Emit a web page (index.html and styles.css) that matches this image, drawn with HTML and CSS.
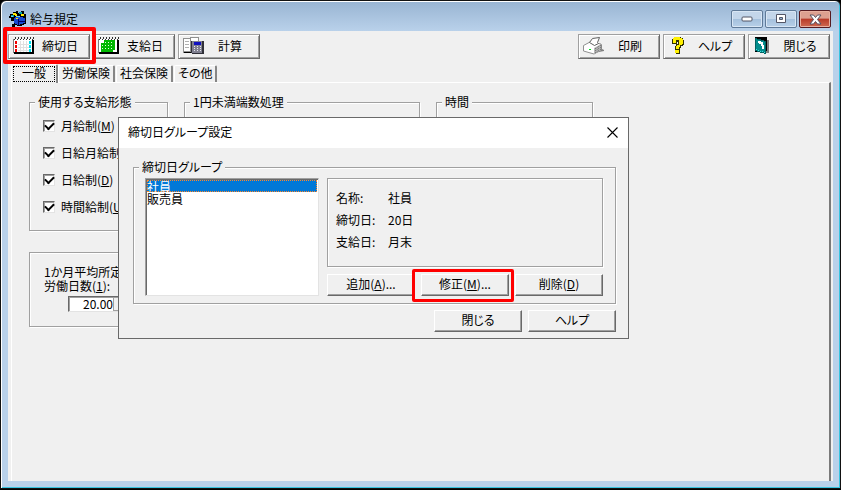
FILE: index.html
```
<!DOCTYPE html>
<html lang="ja">
<head>
    <meta charset="UTF-8">
    <meta name="viewport" content="width=device-width, initial-scale=1.0">
    <title>給与規定</title>
    <link rel="stylesheet" href="styles.css">
</head>
<body>
    <div class="window">
        <header class="titlebar">
            <svg class="app-icon" width="18" height="16" viewBox="0 0 18 16" shape-rendering="crispEdges" aria-hidden="true">
                <path fill="#000" d="M1 3h3V1h3V0h2v2h3V0h3v3h2v3h0v7h-2v1h-2v1H8v-1H6v2H3v-3h2v-3H2V7H0V5h1z"/>
                <path fill="#00a0a8" d="M2 4h3v2H2zM10 1h3v2h-3z"/>
                <path fill="#1848d0" d="M5 7l4-2 7 2v5l-7 2-4-2z"/>
                <path fill="#000060" d="M9 8h1v6H9zM10 10h6v1h-6z"/>
                <path fill="#ffe800" d="M4 2h3v1h1v2H6V4H4zM12 3h3v2h-3zM7 7h2v1H7z"/>
                <path fill="#60d8ff" d="M7 5h4v1H7zM2 5h2v1H2z"/>
            </svg>
            <h1 class="title">給与規定</h1>
            <div class="caption-buttons">
                <button type="button" class="caption" aria-label="最小化">
                    <svg width="12" height="6" viewBox="0 0 12 6"><rect x="1" y="1" width="10" height="4" rx="1" fill="#fff" stroke="#535666"/></svg>
                </button>
                <button type="button" class="caption" aria-label="最大化">
                    <svg width="12" height="10" viewBox="0 0 12 10"><path d="M1.5.5h9v8h-9z" fill="#fff" stroke="#535666"/><path d="M4.500 3.500h3v2h-3z" fill="#8fb0d0" stroke="#535666"/></svg>
                </button>
                <button type="button" class="caption caption-close" aria-label="閉じる">
                    <svg width="13" height="11" viewBox="0 0 13 11"><path d="M1 1h3.500l2 2.500L8.500 1H12L8.500 5.500 12 10H8.500l-2-2.500-2 2.500H1l3.500-4.500z" fill="#fff" stroke="#565060"/></svg>
                </button>
            </div>
        </header>

        <main class="client">
            <nav class="toolbar">
                <button type="button" class="btn tool marked">
                    <svg width="22" height="18" viewBox="0 0 22 18" shape-rendering="crispEdges" aria-hidden="true">
                        <path fill="#fff" d="M1 2h18v14H1z"/>
                        <path fill="#e0e0e0" d="M7 4h1v11H7zM10 4h1v11h-1zM13 4h1v11h-1zM5 7h11v1H5zM5 10h11v1H5zM5 13h11v1H5z"/>
                        <path fill="#808080" d="M0 2h1v14H0z"/>
                        <path fill="#000" d="M1 15h20v2H1zM19 3h2v14h-2z"/>
                        <path fill="#f00000" d="M2 4h2v11H2z"/>
                        <path fill="#00e0f0" d="M16 4h2v11h-2z"/>
                        <path fill="#ffffff" d="M2 7h2v1H2zM2 11h2v1H2zM16 7h2v1h-2zM16 11h2v1h-2z"/>
                        <path fill="#303030" d="M1 2h1v1H1zM2 0h1v2H2zM4 2h1v1H4zM5 0h1v2H5zM7 2h1v1H7zM8 0h1v2H8zM10 2h1v1h-1zM11 0h1v2h-1zM13 2h1v1h-1zM14 0h1v2h-1zM16 2h1v1h-1zM17 0h1v2h-1zM19 2h1v1h-1zM20 0h1v2h-1z"/>
                    </svg>
                    <span class="tool-label">締切日</span>
                </button>
                <button type="button" class="btn tool">
                    <svg width="22" height="18" viewBox="0 0 22 18" shape-rendering="crispEdges" aria-hidden="true">
                        <path fill="#fff" d="M1 2h18v14H1z"/>
                        <path fill="#00b800" d="M6 3h11v10h-2v2H3V6h3z"/>
                        <path fill="#d8ffd8" d="M7 5h1v1H7zM10 5h1v1h-1zM13 5h1v1h-1zM4 8h1v1H4zM7 8h1v1H7zM10 8h1v1h-1zM13 8h1v1h-1zM4 11h1v1H4zM7 11h1v1H7zM10 11h1v1h-1zM13 11h1v1h-1z"/>
                        <path fill="#808080" d="M0 2h1v14H0z"/>
                        <path fill="#000" d="M1 15h20v2H1zM19 3h2v14h-2z"/>
                        <path fill="#303030" d="M1 2h1v1H1zM2 0h1v2H2zM4 2h1v1H4zM5 0h1v2H5zM7 2h1v1H7zM8 0h1v2H8zM10 2h1v1h-1zM11 0h1v2h-1zM13 2h1v1h-1zM14 0h1v2h-1zM16 2h1v1h-1zM17 0h1v2h-1zM19 2h1v1h-1zM20 0h1v2h-1z"/>
                    </svg>
                    <span class="tool-label">支給日</span>
                </button>
                <button type="button" class="btn tool">
                    <svg width="22" height="18" viewBox="0 0 22 18" shape-rendering="crispEdges" aria-hidden="true">
                        <path fill="#909090" d="M0 1h7V0h9v14H9v2H0z"/>
                        <path fill="#fff" d="M1 2h6v12H1zM8 1h7v12H8z"/>
                        <path fill="#b0b0b0" d="M2 4h4v1H2zM2 7h4v1H2zM2 10h4v1H2z"/>
                        <path fill="#000" d="M1 15h8v1H1z"/>
                        <path fill="#808090" d="M9 4h11v13H9z"/>
                        <path fill="#303038" d="M19 4h2v13h-2zM9 16h12v1H9zM8 4h1v12H8z"/>
                        <path fill="#1010c0" d="M11 5h7v3h-7z"/>
                        <path fill="#e8e8f0" d="M11 9h1v1h-1zM14 9h1v1h-1zM17 9h1v1h-1zM11 11h1v1h-1zM14 11h1v1h-1zM17 11h1v1h-1zM11 13h1v1h-1zM14 13h1v1h-1zM17 13h1v1h-1z"/>
                    </svg>
                    <span class="tool-label">計算</span>
                </button>
                <span class="spacer"></span>
                <button type="button" class="btn tool">
                    <svg width="22" height="18" viewBox="0 0 22 18" aria-hidden="true">
                        <path fill="#808080" d="M11 16l10-2v-1l-2-1V7z"/>
                        <path fill="#fff" stroke="#909090" d="M.5 8.500L7 5l11 2v6l-7 4-10.500-3z"/>
                        <path fill="#b8b8b8" d="M11 11l7-4v6l-7 4z"/>
                        <path fill="#fff" stroke="#606060" d="M6.500 5.500l3-4 7-1-2 5 1 1-4 2z"/>
                        <path stroke="#606060" stroke-dasharray="1 1" d="M12 12l6-4M12 14l6-4M12 16l6-4"/>
                        <path fill="#00e020" d="M6 12h2v1H6z"/>
                    </svg>
                    <span class="tool-label">印刷</span>
                </button>
                <button type="button" class="btn tool">
                    <svg width="22" height="18" viewBox="0 0 22 18" shape-rendering="crispEdges" aria-hidden="true">
                        <path fill="#303000" d="M6 0h7v1h2v2h1v5h-1v1h-2v2h-1v2H7V9h1V7h2V5H9v2H4V2h2zM7 13h5v4H8v-1H7z"/>
                        <path fill="#fff000" d="M6 0h6v1h2v1h1v5h-1v1h-2v2h-1v2H8V9h1V8h2V3H8v3H5V1h1zM7 13h4v3H7z"/>
                    </svg>
                    <span class="tool-label">ヘルプ</span>
                </button>
                <button type="button" class="btn tool">
                    <svg width="22" height="18" viewBox="0 0 22 18" shape-rendering="crispEdges" aria-hidden="true">
                        <path fill="#000" d="M2 0h12v15H2z"/>
                        <path fill="#808080" d="M14 3h2v13h-5v-2h3z"/>
                        <path fill="#008c8c" stroke="#006060" d="M2.500 1.500l10 3v12l-10-3z"/>
                        <path fill="#fff" d="M5 4h3v1h2v3h1v4h-2V9H8V7H6V6H5z"/>
                        <path fill="#40e0e0" d="M3 12h1v1H3zM5 13h1v1H5zM7 14h1v1H7zM9 14h1v1H9zM11 15h1v1h-1z"/>
                    </svg>
                    <span class="tool-label">閉じる</span>
                </button>
            </nav>

            <div class="tabs" role="tablist">
                <button type="button" role="tab" class="tab tab-active" aria-selected="true"><span class="tab-focus">一般</span></button>
                <button type="button" role="tab" class="tab">労働保険</button>
                <button type="button" role="tab" class="tab">社会保険</button>
                <button type="button" role="tab" class="tab">その他</button>
            </div>

            <section class="panel" role="tabpanel">
                <fieldset class="group">
                    <legend>使用する支給形態</legend>
                    <label class="check"><input type="checkbox" checked><span>月給制(<u>M</u>)</span></label>
                    <label class="check"><input type="checkbox" checked><span>日給月給制</span></label>
                    <label class="check"><input type="checkbox" checked><span>日給制(<u>D</u>)</span></label>
                    <label class="check"><input type="checkbox" checked><span>時間給制(<u>U</u>)</span></label>
                </fieldset>
                <fieldset class="group">
                    <legend>1円未満端数処理</legend>
                </fieldset>
                <fieldset class="group">
                    <legend>時間</legend>
                </fieldset>
                <div class="group days">
                    <label for="days">1か月平均所定<br>労働日数(<u>1</u>):</label>
                    <div class="spin">
                        <input type="text" id="days" value="20.00">
                        <button type="button" class="spin-btn" aria-label="日数を選択"></button>
                    </div>
                </div>
            </section>
        </main>

        <!-- 締切日グループ設定ダイアログ -->
        <div class="dialog" role="dialog" aria-labelledby="dialog-title">
            <div class="dialog-title">
                <h2 class="title" id="dialog-title">締切日グループ設定</h2>
                <button type="button" class="dialog-x" aria-label="閉じる">
                    <svg width="11" height="11" viewBox="0 0 11 11"><path d="M.5.5l10 10M10.500.5l-10 10" stroke="#000" stroke-width="1.100"/></svg>
                </button>
            </div>
            <div class="dialog-body">
                <fieldset class="group closing">
                    <legend>締切日グループ</legend>
                    <select class="listbox" size="9" aria-label="締切日グループ">
                        <option selected>社員</option>
                        <option>販売員</option>
                    </select>
                    <div class="detail">
                        <dl class="info">
                            <dt>名称:</dt><dd>社員</dd>
                            <dt>締切日:</dt><dd>20日</dd>
                            <dt>支給日:</dt><dd>月末</dd>
                        </dl>
                        <div class="actions">
                            <button type="button" class="btn">追加(<u>A</u>)...</button>
                            <button type="button" class="btn marked marked-wide">修正(<u>M</u>)...</button>
                            <button type="button" class="btn">削除(<u>D</u>)</button>
                        </div>
                    </div>
                </fieldset>
                <div class="dialog-footer">
                    <button type="button" class="btn">閉じる</button>
                    <button type="button" class="btn">ヘルプ</button>
                </div>
            </div>
        </div>
    </div>
</body>
</html>
```
FILE: styles.css
```
* {
    margin: 0;
    padding: 0;
    box-sizing: border-box;
}
body {
    background: #000;
    color: #000;
    font-family: "Noto Sans CJK JP", sans-serif;
    font-size: 12px;
    line-height: 14px;
    font-feature-settings: "palt";
    overflow: hidden;
}
button, input, select {
    font: inherit;
    color: inherit;
    font-feature-settings: inherit;
}
.window {
    position: relative;
    display: flex;
    flex-direction: column;
    height: calc(100vh - 1px);
    border: 1px solid #111;
    border-radius: 6px 6px 0 0;
    padding: 0 7px 7px;
    background: linear-gradient(#98b4d2, #b9d1ea 30px);
    box-shadow: inset 1px 1px 0 #fff, inset -1px -1px 0 #38c4e0;
}

/* タイトルバー */
.titlebar {
    display: flex;
    align-items: center;
    height: 30px;
    padding: 6px 2px 0 1px;
    flex: none;
}
.title {
    font-size: 12px;
    font-weight: normal;
}
.titlebar .title {
    margin-left: 3px;
}
.caption-buttons {
    display: flex;
    gap: 2px;
    margin-left: auto;
}
.caption {
    display: flex;
    align-items: center;
    justify-content: center;
    width: 32px;
    height: 18px;
    border: 1px solid #5f7a98;
    border-radius: 2px;
    background: linear-gradient(#c3d6ea 50%, #a4c0dc 50%, #b8d0e8);
    box-shadow: inset 0 0 0 1px #d8e6f4;
}
.caption-close {
    border-color: #561a20;
    background: linear-gradient(#dda090 45%, #b83a28 50%, #cf6a52);
    box-shadow: inset 0 0 0 1px #e8b0a0;
}

/* ツールバー */
.client {
    display: flex;
    flex-direction: column;
    flex: 1;
    padding-top: 3px;
    background: #f0f0f0;
}
.toolbar {
    display: flex;
    gap: 3px;
    padding-right: 3px;
}
.spacer {
    flex: 1;
}
.btn {
    position: relative;
    height: 22px;
    padding-bottom: 2px;
    background: #f0f0f0;
    border: 1px solid;
    border-color: #fff #696969 #696969 #fff;
    box-shadow: inset -1px -1px 0 #a0a0a0;
}
.tool {
    display: flex;
    align-items: center;
    width: 82px;
    height: 25px;
    padding: 0 4px 1px;
    border-color: #a0a0a0 #696969 #696969 #a0a0a0;
    box-shadow: inset 1px 1px 0 #fff, inset -1px -1px 0 #a0a0a0;
}
.tool svg {
    flex: none;
}
.tool-label {
    flex: 1;
    text-align: center;
}
/* 赤枠の強調表示 */
.marked::after {
    content: "";
    position: absolute;
    inset: -8px -7px -6px -6px;
    border: 4px solid #f00;
    border-radius: 2px;
    z-index: 1;
}
.marked-wide::after {
    inset: -6px -6px -7px -10px;
    border-width: 3px;
}

/* タブ */
.tabs {
    display: flex;
    align-items: flex-end;
    margin: 5px 0 0 3px;
}
.tab {
    height: 17px;
    padding: 0 3px 2px;
    margin-right: 1px;
    background: #f0f0f0;
    border: 0 solid;
    border-width: 1px 2px 0 1px;
    border-color: #fff #868686 #fff #fff;
    border-radius: 2px 2px 0 0;
}
.tab-active {
    height: 19px;
    margin: 0 0 -1px;
    padding: 0 1px;
    z-index: 1;
}
.tab-focus {
    display: block;
    padding: 0 8px;
    height: 16px;
    border: 1px dotted #000;
    line-height: 12px;
}
.panel {
    display: grid;
    grid-template-columns: 139px 236px 157px;
    align-content: start;
    gap: 21px 16px;
    flex: 1;
    margin: 0 2px 0 3px;
    padding: 12px 17px;
    border: 1px solid #fff;
    border-right: 2px solid #7a7a7a;
    border-bottom: 0;
}
.group {
    min-width: 0;
    border: 1px solid #a0a0a0;
    box-shadow: 1px 1px 0 #fff, inset 1px 1px 0 #fff;
    padding: 3px 13px 10px;
    white-space: nowrap;
}
.group legend {
    margin-left: -8px;
    padding: 0 3px;
    background: #f0f0f0;
}
.check {
    display: flex;
    align-items: center;
    gap: 6px;
    height: 27px;
}
.check input {
    appearance: none;
    width: 12px;
    height: 12px;
    border: 1px solid;
    border-color: #696969 #e3e3e3 #e3e3e3 #696969;
    box-shadow: inset 1px 1px 0 #a0a0a0;
    background: #fff;
    display: grid;
    place-items: center;
}
.check input:checked::before {
    content: "";
    width: 7px;
    height: 4px;
    margin-top: -2px;
    border: solid #000;
    border-width: 0 0 2px 2px;
    transform: rotate(-45deg);
}
.days {
    padding: 12px 13px 14px;
}
.days label {
    display: block;
    padding-bottom: 3px;
    margin-left: 1px;
}
.spin {
    display: flex;
    height: 16px;
    margin-left: 25px;
    width: 64px;
    background: #fff;
    border: 1px solid;
    border-color: #696969 #e3e3e3 #e3e3e3 #696969;
    box-shadow: inset 1px 1px 0 #a0a0a0;
}
.spin input {
    width: 44px;
    border: 0;
    background: none;
    text-align: right;
}
.spin-btn {
    flex: 1;
    background: #f0f0f0;
    border: 1px solid #a0a0a0;
}

/* ダイアログ */
.dialog {
    position: absolute;
    left: 117px;
    top: 116px;
    background: #f0f0f0;
    border: 1px solid #696969;
    z-index: 2;
}
.dialog-title {
    display: flex;
    align-items: center;
    justify-content: space-between;
    height: 30px;
    padding: 0 10px 2px 9px;
    background: #fff;
}
.dialog-x {
    display: flex;
    background: none;
    border: 0;
}
.dialog-body {
    padding: 12px 12px 6px 14px;
}
.closing {
    display: grid;
    grid-template-columns: 174px 276px;
    gap: 8px;
    padding: 4px 12px 7px 11px;
}
.closing legend {
    margin-left: -6px;
}
.listbox {
    height: 118px;
    overflow: hidden;
    background: #fff;
    border: 1px solid;
    border-color: #a0a0a0 #e3e3e3 #e3e3e3 #a0a0a0;
    border-radius: 0;
    box-shadow: inset 1px 1px 0 #696969;
    padding: 1px;
    outline: 0;
}
.listbox option {
    display: flex;
    align-items: center;
    height: 12px;
    min-height: 12px;
    padding: 0;
    overflow: visible;
}
.listbox option:checked {
    background: #0078d7 linear-gradient(#0078d7, #0078d7);
    -webkit-text-fill-color: #fff;
    outline: 1px dotted #ff8728;
    outline-offset: -1px;
}
.detail {
    display: flex;
    flex-direction: column;
    justify-content: space-between;
}
.info {
    display: grid;
    grid-template-columns: 52px 1fr;
    grid-auto-rows: 22px;
    line-height: 22px;
    height: 89px;
    padding: 8px;
    border: 1px solid #a0a0a0;
    box-shadow: 1px 1px 0 #fff, inset 1px 1px 0 #fff;
}
.actions {
    display: grid;
    grid-template-columns: repeat(3, 1fr);
    gap: 6px;
}
.dialog-footer {
    display: flex;
    justify-content: flex-end;
    gap: 6px;
    margin-top: 6px;
}
.dialog-footer .btn {
    width: 88px;
}
```
